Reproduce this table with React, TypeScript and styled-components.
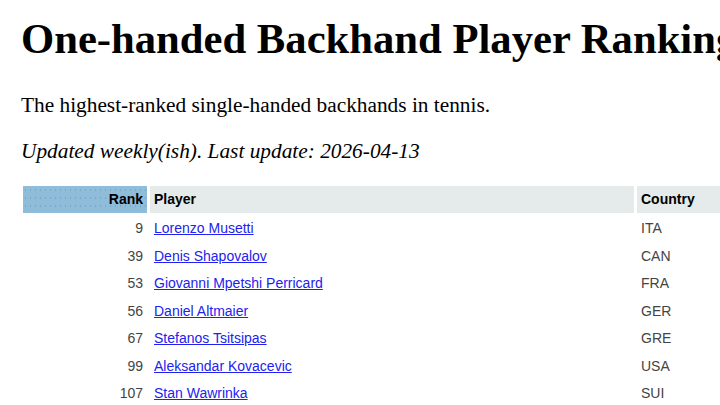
import { FC } from 'react'
import { createGlobalStyle, styled } from 'styled-components'

const GlobalStyle = createGlobalStyle`
  html, body {
    margin: 0;
    padding: 0;
    background: #fff;
  }
  body {
    font-family: "Liberation Serif", "Times New Roman", serif;
    font-size: 21.33px;
    color: #000;
  }
`

const Page = styled.main`
  padding: 0 21px;
  width: 900px;
`

const Title = styled.h1`
  font-size: 42.67px;
  font-weight: bold;
  margin: 0 0 30px;
  padding-top: 14px;
  white-space: nowrap;
`

const Lead = styled.p`
  margin: 0 0 21px;
`

const Updated = styled.p`
  font-style: italic;
  margin: 0 0 19px;
`

const Table = styled.table`
  border-collapse: separate;
  border-spacing: 3px;
  margin-left: -1px;
  font-family: "Liberation Sans", Arial, sans-serif;
  font-size: 14px;
`

const HeadCell = styled.th<{ $sorted?: boolean; $align?: string; $width: number }>`
  width: ${({ $width }) => $width}px;
  text-align: ${({ $align }) => $align ?? 'left'};
  padding: 5px 4px;
  line-height: 17px;
  font-weight: bold;
  color: #000;
  background-color: ${({ $sorted }) => ($sorted ? '#8ebcd9' : '#e4ebea')};
  background-image: ${({ $sorted }) =>
    $sorted
      ? 'radial-gradient(circle, rgba(70,120,160,0.28) 0.6px, transparent 0.8px)'
      : 'none'};
  background-size: 5px 8px;
`

const Cell = styled.td<{ $align?: string }>`
  text-align: ${({ $align }) => $align ?? 'left'};
  padding: 4px;
  line-height: 16.5px;
  color: #444;
`

const PlayerLink = styled.a`
  color: #2222ee;
  text-decoration: underline;
`

type Player = { rank: number; name: string; country: string }

const players: Player[] = [
  { rank: 9, name: 'Lorenzo Musetti', country: 'ITA' },
  { rank: 39, name: 'Denis Shapovalov', country: 'CAN' },
  { rank: 53, name: 'Giovanni Mpetshi Perricard', country: 'FRA' },
  { rank: 56, name: 'Daniel Altmaier', country: 'GER' },
  { rank: 67, name: 'Stefanos Tsitsipas', country: 'GRE' },
  { rank: 99, name: 'Aleksandar Kovacevic', country: 'USA' },
  { rank: 107, name: 'Stan Wawrinka', country: 'SUI' },
]

const App: FC = () => {
  return (
    <Page>
      <GlobalStyle />
      <Title>One-handed Backhand Player Rankings</Title>
      <Lead>The highest-ranked single-handed backhands in tennis.</Lead>
      <Updated>Updated weekly(ish). Last update: 2026-04-13</Updated>
      <Table>
        <thead>
          <tr>
            <HeadCell $sorted $align="right" $width={116}>
              Rank
            </HeadCell>
            <HeadCell $width={476}>Player</HeadCell>
            <HeadCell $width={120}>Country</HeadCell>
          </tr>
        </thead>
        <tbody>
          {players.map((player) => (
            <tr key={player.rank}>
              <Cell $align="right">{player.rank}</Cell>
              <Cell>
                <PlayerLink href="#">{player.name}</PlayerLink>
              </Cell>
              <Cell>{player.country}</Cell>
            </tr>
          ))}
        </tbody>
      </Table>
    </Page>
  )
}

export default App
